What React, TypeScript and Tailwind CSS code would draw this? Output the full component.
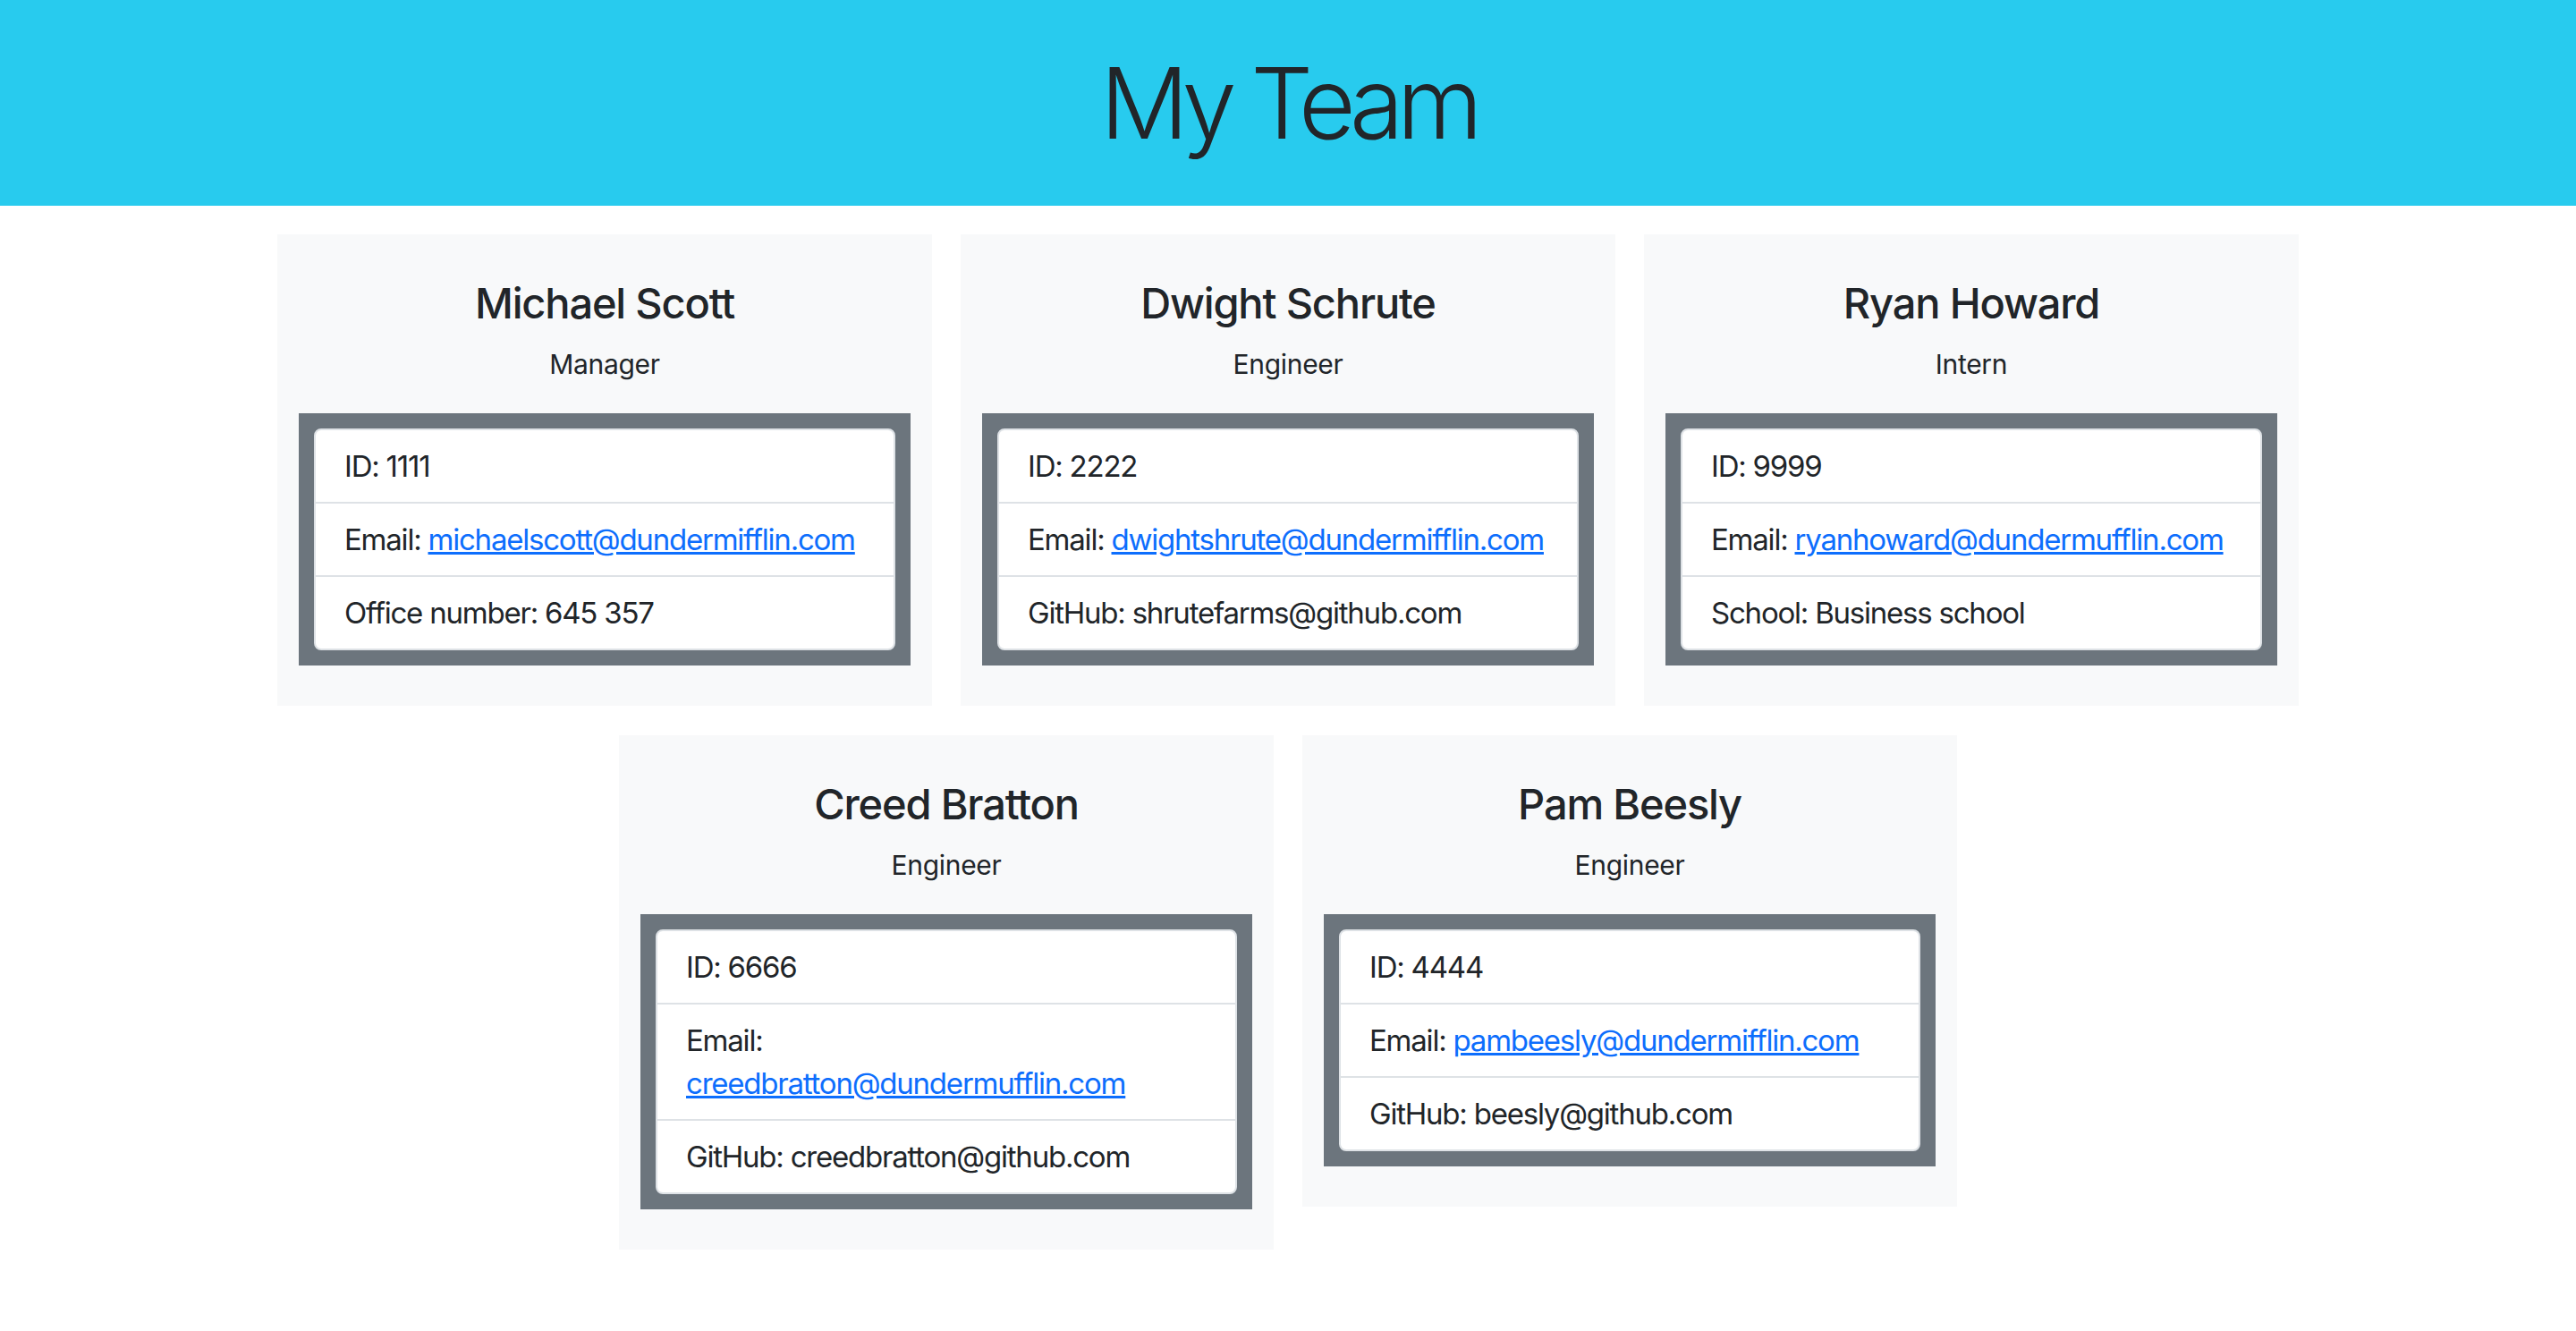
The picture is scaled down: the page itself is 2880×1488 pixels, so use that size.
const team = [
  {
    name: "Michael Scott",
    role: "Manager",
    id: "1111",
    email: "michaelscott@dundermifflin.com",
    extra: "Office number: 645 357",
  },
  {
    name: "Dwight Schrute",
    role: "Engineer",
    id: "2222",
    email: "dwightshrute@dundermifflin.com",
    extra: "GitHub: shrutefarms@github.com",
  },
  {
    name: "Ryan Howard",
    role: "Intern",
    id: "9999",
    email: "ryanhoward@dundermufflin.com",
    extra: "School: Business school",
  },
  {
    name: "Creed Bratton",
    role: "Engineer",
    id: "6666",
    email: "creedbratton@dundermufflin.com",
    extra: "GitHub: creedbratton@github.com",
  },
  {
    name: "Pam Beesly",
    role: "Engineer",
    id: "4444",
    email: "pambeesly@dundermifflin.com",
    extra: "GitHub: beesly@github.com",
  },
];

type Member = (typeof team)[number];

function MemberCard({ member }: { member: Member }) {
  return (
    <div className="w-[732px] bg-[#f8f9fa] px-[24px] pt-[49px] pb-[45px] flex flex-col items-center">
      <h4 className="text-[47px] leading-[56px] font-medium tracking-[-0.025em] text-[#212529] text-center">
        {member.name}
      </h4>
      <p className="mt-[18px] text-[30px] leading-[45px] tracking-[-0.01em] text-[#212529] text-center">
        {member.role}
      </p>
      <div className="mt-[32px] w-full bg-[#6c757d] p-[17px]">
        <ul className="bg-white border-2 border-[#dee2e6] rounded-[8px] text-[33px] leading-[48px] tracking-[-0.037em] text-[#212529]">
          <li className="px-[32px] py-[16px]">ID: {member.id}</li>
          <li className="px-[32px] py-[16px] border-t-2 border-[#dee2e6]">
            Email:{" "}
            <a href={`mailto:${member.email}`} className="text-[#0d6efd] underline">
              {member.email}
            </a>
          </li>
          <li className="px-[32px] py-[16px] border-t-2 border-[#dee2e6]">{member.extra}</li>
        </ul>
      </div>
    </div>
  );
}

export default function App() {
  return (
    <div className="min-h-screen bg-white font-['Inter','Noto_Sans',sans-serif]">
      <header className="h-[230px] bg-[#28cbee] flex items-center justify-center">
        <h1 className="text-[110px] leading-none font-light tracking-[-0.07em] text-[#212529]">My Team</h1>
      </header>
      <main className="w-[2260px] mx-auto pt-[32px] pb-[40px] flex flex-wrap items-start justify-center gap-x-[32px] gap-y-[33px]">
        {team.map((m) => (
          <MemberCard key={m.id} member={m} />
        ))}
      </main>
    </div>
  );
}
